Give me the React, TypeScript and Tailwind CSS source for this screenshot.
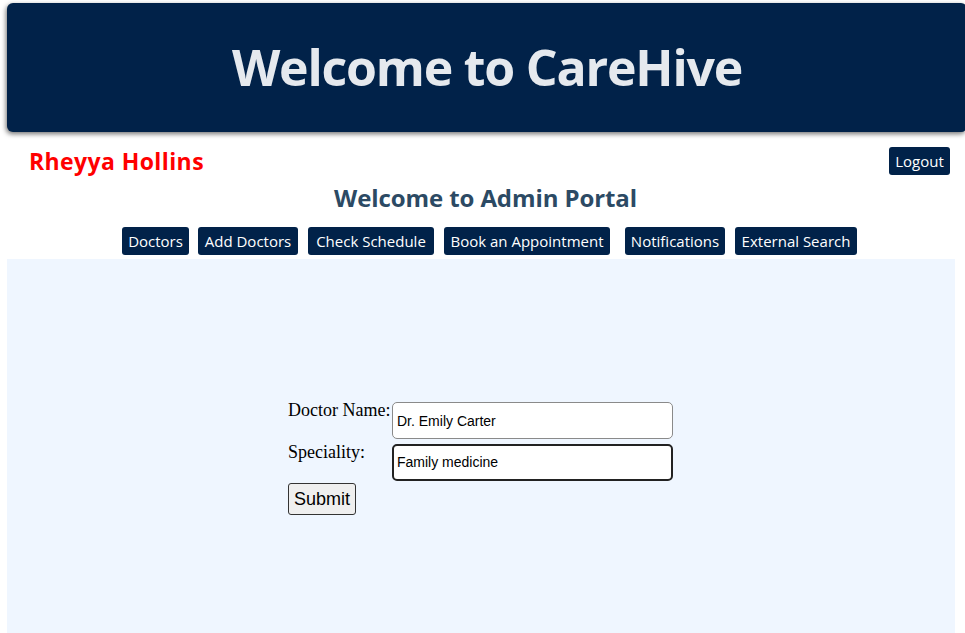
import { useState } from "react";

const navItems = [
  { label: "Doctors", cls: "w-[67px]" },
  { label: "Add Doctors", cls: "w-[100px] ml-[9px]" },
  { label: "Check Schedule", cls: "w-[126px] ml-[10px]" },
  { label: "Book an Appointment", cls: "w-[166px] ml-[10px]" },
  { label: "Notifications", cls: "w-[100px] ml-[15px]" },
  { label: "External Search", cls: "w-[122px] ml-[10px]" },
];

export default function App() {
  const [doctorName, setDoctorName] = useState("Dr. Emily Carter");
  const [speciality, setSpeciality] = useState("Family medicine");

  return (
    <div className="w-[965px] h-[633px] overflow-hidden bg-white font-['Open_Sans',sans-serif]">
      <header className="mt-[3px] ml-[7px] w-[960px] h-[129px] rounded-[6px] bg-[#012249] shadow-[-1px_2px_5px_rgba(0,0,0,0.55)] flex items-center justify-center">
        <h1 className="text-[50px] font-bold text-[#e5e9ee] tracking-[-1.2px]">
          Welcome to CareHive
        </h1>
      </header>

      <div className="flex items-center justify-between pl-[29px] pr-[15px] pt-[15px] h-[43px]">
        <h2 className="text-[23px] font-bold text-[#ff0000] leading-none tracking-[0.4px]">
          Rheyya Hollins
        </h2>
        <button className="h-[28px] w-[61px] rounded-[3px] bg-[#012249] text-white text-[15px]">
          Logout
        </button>
      </div>

      <h2 className="mt-[8px] pl-[6px] text-center text-[24px] font-bold text-[#2c4a64] leading-[30px] tracking-[-0.1px]">
        Welcome to Admin Portal
      </h2>

      <nav className="mt-[14px] flex justify-center pl-[14px]">
        {navItems.map((item) => (
          <button
            key={item.label}
            className={`h-[28px] rounded-[3px] bg-[#012249] text-white text-[15px] ${item.cls}`}
          >
            {item.label}
          </button>
        ))}
      </nav>

      <main className="mt-[4px] ml-[7px] w-[948px] h-[380px] bg-[#eff6ff] pt-[143px] pl-[281px]">
        <form
          className="font-['Liberation_Serif',serif] text-[18px] text-black"
          onSubmit={(e) => e.preventDefault()}
        >
          <div className="flex items-start">
            <label className="w-[104px] leading-[18px] -mt-[1px]">Doctor Name:</label>
            <input
              value={doctorName}
              onChange={(e) => setDoctorName(e.target.value)}
              className="w-[281px] h-[37px] rounded-[5px] border border-[#8a8a8a] bg-white px-[4px] font-['Liberation_Sans',sans-serif] text-[14px]"
            />
          </div>
          <div className="flex items-start mt-[5px]">
            <label className="w-[104px] leading-[18px] -mt-[1px]">Speciality:</label>
            <input
              value={speciality}
              onChange={(e) => setSpeciality(e.target.value)}
              className="w-[281px] h-[37px] rounded-[5px] border-2 border-[#222] bg-white px-[3px] pb-[2px] font-['Liberation_Sans',sans-serif] text-[14px]"
            />
          </div>
          <button
            type="submit"
            className="mt-[2px] h-[32px] px-[5px] rounded-[3px] border border-[#333] bg-[#efefef] font-['Liberation_Sans',sans-serif] text-[18px]"
          >
            Submit
          </button>
        </form>
      </main>
    </div>
  );
}
